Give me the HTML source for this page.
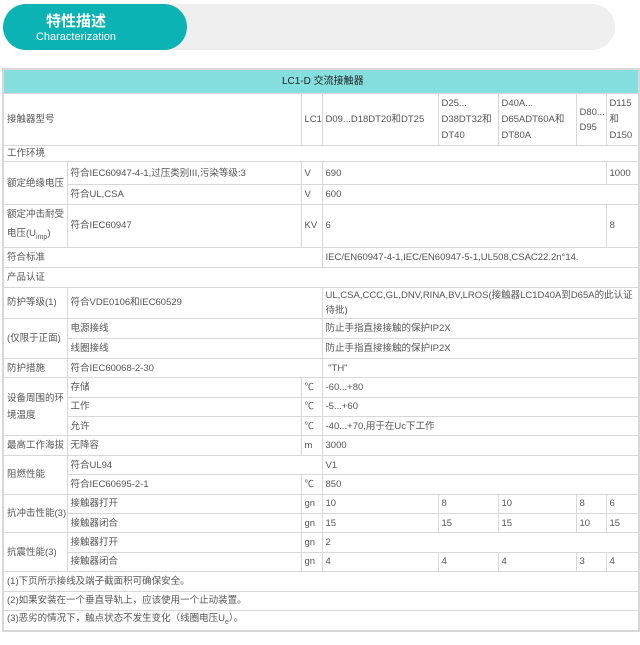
<!DOCTYPE html>
<html><head><meta charset="utf-8"><style>
body{margin:0;width:640px;height:645px;background:#fff;position:relative;font-family:"Liberation Sans","Noto Sans CJK SC",sans-serif;overflow:hidden}
.bar{position:absolute;left:3px;top:4px;width:612px;height:46px;border-radius:23px;background:#efefef}
.pill{position:absolute;left:3px;top:4px;width:184px;height:46px;border-radius:23px;background:#0cb3b5;color:#fff;text-align:center}
.pill .a{position:absolute;left:0;width:146px;top:9px;font-size:15px;font-weight:bold;line-height:18px}
.pill .b{position:absolute;left:0;width:146px;top:27px;font-size:11px;line-height:13px}
table{position:absolute;left:2px;top:68px;width:636px;border-collapse:collapse;table-layout:fixed;font-size:9.5px;color:#555;border:2px solid #d8d8d8}
td{border:1px solid #d8d8d8;padding:0 0 0 3px;line-height:15px;vertical-align:middle;overflow:hidden;white-space:nowrap}
td.w{white-space:normal}
tr{height:19.4px}
.h td{background:#86dfdf;color:#222;text-align:center;font-size:10px;height:23px}
sub{font-size:7px}
</style></head><body>
<div class="bar"></div>
<div class="pill"><div class="a">特性描述</div><div class="b">Characterization</div></div>
<table>
<colgroup><col style="width:64px"><col style="width:234px"><col style="width:21px"><col style="width:116px"><col style="width:60px"><col style="width:78px"><col style="width:30px"><col style="width:33px"></colgroup>
<tr class="h"><td colspan="8">LC1-D 交流接触器</td></tr>
<tr style="height:52px"><td colspan="2">接触器型号</td><td>LC1</td><td>D09...D18DT20和DT25</td><td class="w" style="line-height:16px">D25...<br>D38DT32和<br>DT40</td><td class="w" style="line-height:16px">D40A...<br>D65ADT60A和<br>DT80A</td><td class="w">D80...<br>D95</td><td class="w" style="line-height:16px">D115<br>和<br>D150</td></tr>
<tr style="height:16px"><td colspan="8">工作环境</td></tr>
<tr style="height:23px"><td rowspan="2">额定绝缘电压</td><td>符合IEC60947-4-1,过压类别III,污染等级:3</td><td>V</td><td colspan="4">690</td><td colspan="2">1000</td></tr>
<tr style="height:20px"><td>符合UL,CSA</td><td>V</td><td colspan="6">600</td></tr>
<tr style="height:40px"><td class="w" style="line-height:19px">额定冲击耐受电压(U<sub>imp</sub>)</td><td>符合IEC60947</td><td>KV</td><td colspan="4">6</td><td colspan="2">8</td></tr>
<tr style="height:20px"><td colspan="3">符合标准</td><td colspan="5">IEC/EN60947-4-1,IEC/EN60947-5-1,UL508,CSAC22.2n°14.</td></tr>
<tr style="height:20px"><td colspan="8">产品认证</td></tr>
<tr style="height:31px"><td>防护等级(1)</td><td colspan="2">符合VDE0106和IEC60529</td><td colspan="5" class="w">UL,CSA,CCC,GL,DNV,RINA,BV,LROS(接触器LC1D40A到D65A的此认证待批)</td></tr>
<tr style="height:20px"><td rowspan="2">(仅限于正面)</td><td colspan="2">电源接线</td><td colspan="5">防止手指直接接触的保护IP2X</td></tr>
<tr style="height:20px"><td colspan="2">线圈接线</td><td colspan="5">防止手指直接接触的保护IP2X</td></tr>
<tr><td>防护措施</td><td colspan="2">符合IEC60068-2-30</td><td colspan="5">&nbsp;"TH"</td></tr>
<tr><td rowspan="3" class="w" style="line-height:17px">设备周围的环境温度</td><td>存储</td><td>℃</td><td colspan="5">-60...+80</td></tr>
<tr><td>工作</td><td>℃</td><td colspan="5">-5...+60</td></tr>
<tr><td>允许</td><td>℃</td><td colspan="5">-40...+70,用于在Uc下工作</td></tr>
<tr><td>最高工作海拔</td><td>无降容</td><td>m</td><td colspan="5">3000</td></tr>
<tr><td rowspan="2">阻燃性能</td><td colspan="2">符合UL94</td><td colspan="5">V1</td></tr>
<tr><td>符合IEC60695-2-1</td><td>℃</td><td colspan="5">850</td></tr>
<tr><td rowspan="2">抗冲击性能(3)</td><td>接触器打开</td><td>gn</td><td>10</td><td>8</td><td>10</td><td>8</td><td>6</td></tr>
<tr><td>接触器闭合</td><td>gn</td><td>15</td><td>15</td><td>15</td><td>10</td><td>15</td></tr>
<tr><td rowspan="2">抗震性能(3)</td><td>接触器打开</td><td>gn</td><td colspan="5">2</td></tr>
<tr><td>接触器闭合</td><td>gn</td><td>4</td><td>4</td><td>4</td><td>3</td><td>4</td></tr>
<tr><td colspan="8">(1)下页所示接线及端子截面积可确保安全。</td></tr>
<tr><td colspan="8">(2)如果安装在一个垂直导轨上，应该使用一个止动装置。</td></tr>
<tr style="height:21px"><td colspan="8">(3)恶劣的情况下，触点状态不发生变化（线圈电压U<sub>e</sub>）。</td></tr>
</table>
</body></html>
